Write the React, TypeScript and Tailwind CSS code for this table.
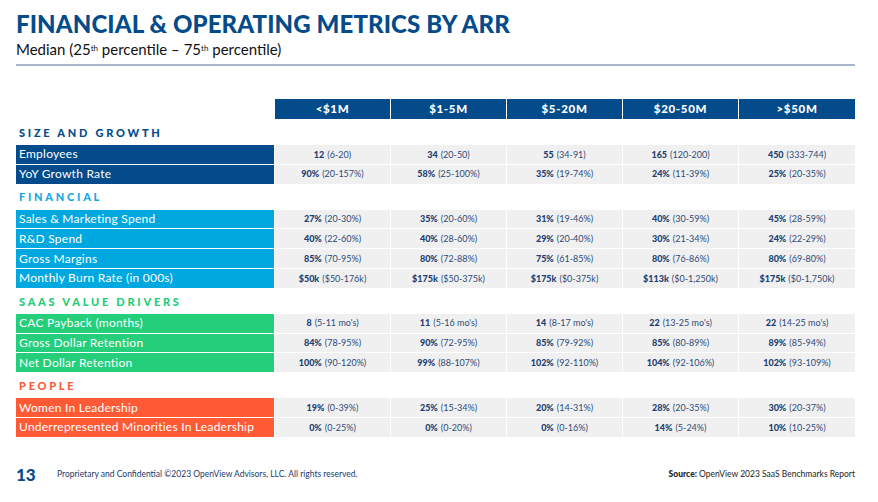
const NAVY = "bg-[#034b8a]";

type Row = { label: string; cells: [string, string][] };
type Section = { title: string; titleColor: string; bg: string; rows: Row[] };

const sections: Section[] = [
  {
    title: "SIZE AND GROWTH",
    titleColor: "text-[#034b8a]",
    bg: "bg-[#034b8a]",
    rows: [
      { label: "Employees", cells: [["12", "(6-20)"], ["34", "(20-50)"], ["55", "(34-91)"], ["165", "(120-200)"], ["450", "(333-744)"]] },
      { label: "YoY Growth Rate", cells: [["90%", "(20-157%)"], ["58%", "(25-100%)"], ["35%", "(19-74%)"], ["24%", "(11-39%)"], ["25%", "(20-35%)"]] },
    ],
  },
  {
    title: "FINANCIAL",
    titleColor: "text-[#12a7e0]",
    bg: "bg-[#01a8e0]",
    rows: [
      { label: "Sales & Marketing Spend", cells: [["27%", "(20-30%)"], ["35%", "(20-60%)"], ["31%", "(19-46%)"], ["40%", "(30-59%)"], ["45%", "(28-59%)"]] },
      { label: "R&D Spend", cells: [["40%", "(22-60%)"], ["40%", "(28-60%)"], ["29%", "(20-40%)"], ["30%", "(21-34%)"], ["24%", "(22-29%)"]] },
      { label: "Gross Margins", cells: [["85%", "(70-95%)"], ["80%", "(72-88%)"], ["75%", "(61-85%)"], ["80%", "(76-86%)"], ["80%", "(69-80%)"]] },
      { label: "Monthly Burn Rate (in 000s)", cells: [["$50k", "($50-176k)"], ["$175k", "($50-375k)"], ["$175k", "($0-375k)"], ["$113k", "($0-1,250k)"], ["$175k", "($0-1,750k)"]] },
    ],
  },
  {
    title: "SAAS VALUE DRIVERS",
    titleColor: "text-[#23cd78]",
    bg: "bg-[#24ce7b]",
    rows: [
      { label: "CAC Payback (months)", cells: [["8", "(5-11 mo's)"], ["11", "(5-16 mo's)"], ["14", "(8-17 mo's)"], ["22", "(13-25 mo's)"], ["22", "(14-25 mo's)"]] },
      { label: "Gross Dollar Retention", cells: [["84%", "(78-95%)"], ["90%", "(72-95%)"], ["85%", "(79-92%)"], ["85%", "(80-89%)"], ["89%", "(85-94%)"]] },
      { label: "Net Dollar Retention", cells: [["100%", "(90-120%)"], ["99%", "(88-107%)"], ["102%", "(92-110%)"], ["104%", "(92-106%)"], ["102%", "(93-109%)"]] },
    ],
  },
  {
    title: "PEOPLE",
    titleColor: "text-[#ff5a38]",
    bg: "bg-[#ff5935]",
    rows: [
      { label: "Women In Leadership", cells: [["19%", "(0-39%)"], ["25%", "(15-34%)"], ["20%", "(14-31%)"], ["28%", "(20-35%)"], ["30%", "(20-37%)"]] },
      { label: "Underrepresented Minorities In Leadership", cells: [["0%", "(0-25%)"], ["0%", "(0-20%)"], ["0%", "(0-16%)"], ["14%", "(5-24%)"], ["10%", "(10-25%)"]] },
    ],
  },
];

const headers = ["<$1M", "$1-5M", "$5-20M", "$20-50M", ">$50M"];
const GRID = "grid grid-cols-[258px_115px_115px_115px_115px_116px] gap-x-px";

export default function App() {
  return (
    <div className="w-[878px] h-[502px] bg-white font-['Lato',sans-serif] relative overflow-hidden">
      <div className="px-4 pt-[10px]">
        <h1 className="text-[24px] leading-[28px] font-black text-[#034b8a] tracking-[0.005em]">
          FINANCIAL &amp; OPERATING METRICS BY ARR
        </h1>
        <p className="mt-[2px] text-[15px] leading-[18px] text-[#111]">
          Median (25<sup className="text-[8px]">th</sup> percentile – 75<sup className="text-[8px]">th</sup> percentile)
        </p>
        <div className="mt-[6px] h-[2px] w-[839px] bg-[#aab5cc]" />
      </div>

      <div className="px-4 pt-[33px]">
        <div className={GRID}>
          <div />
          {headers.map((h) => (
            <div key={h} className={`${NAVY} h-[20px] flex items-center justify-center text-white text-[11.5px] font-black tracking-[0.06em]`}>
              {h}
            </div>
          ))}
        </div>

        {sections.map((s) => (
          <div key={s.title}>
            <div className={`h-[26px] flex items-center pl-[3px] pt-[2px] text-[11px] font-black tracking-[0.25em] ${s.titleColor}`}>
              {s.title}
            </div>
            <div className="flex flex-col gap-y-px">
              {s.rows.map((r) => (
                <div key={r.label} className={GRID}>
                  <div className={`${s.bg} h-[18.8px] flex items-center pl-[3px] text-white text-[12px] tracking-[0.02em]`}>
                    {r.label}
                  </div>
                  {r.cells.map(([v, range], i) => (
                    <div key={i} className="bg-[#f0f0f0] h-[18.8px] flex items-center justify-center text-[9px] text-[#213f72]">
                      <span className="font-black">{v}</span>
                      <span className="ml-[3px] text-[#2e4a78]">{range}</span>
                    </div>
                  ))}
                </div>
              ))}
            </div>
          </div>
        ))}
      </div>

      <div className="absolute left-4 right-[23px] top-[462px] flex items-center">
        <span className="text-[17px] font-black text-[#034b8a] w-[41px]">13</span>
        <span className="text-[8.5px] text-[#1b3a6b]">
          Proprietary and Confidential ©2023 OpenView Advisors, LLC. All rights reserved.
        </span>
        <span className="ml-auto text-[8.5px] text-[#222]">
          <span className="font-black">Source:</span> OpenView 2023 SaaS Benchmarks Report
        </span>
      </div>
    </div>
  );
}
